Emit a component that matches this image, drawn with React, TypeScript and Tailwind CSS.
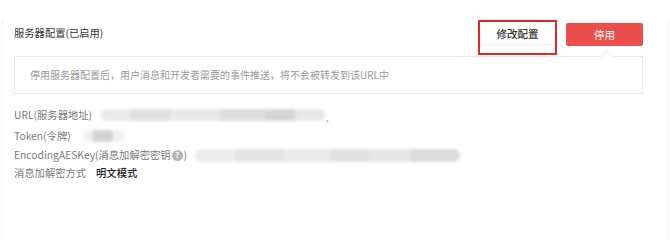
import { type ReactNode } from 'react';

// blurred-out secret values, drawn as soft grey strips
function Redacted({ widths, className }: { widths: [number, string][]; className: string }) {
  return (
    <div className={`flex items-stretch overflow-hidden rounded-full blur-[1.5px] ${className}`}>
      {widths.map(([w, c], i) => (
        <div key={i} className={c} style={{ width: w }} />
      ))}
    </div>
  );
}

function Row({ label, children, h }: { label: ReactNode; children?: ReactNode; h: string }) {
  return (
    <div className={`flex items-center ${h}`}>
      <div className="flex items-center whitespace-nowrap text-[#7a7a7a]">{label}</div>
      {children}
    </div>
  );
}

export default function App() {
  return (
    <div className="h-[227px] w-[670px] bg-white px-[2px] font-['Noto_Sans_CJK_SC',sans-serif] text-[10.3px] leading-[14px]">
      <div className="h-full border-x border-[#f2f2f2] pl-[11px] pr-[24px]">
        {/* Header */}
        <div className="mt-[20px] flex items-start justify-between">
          <h2 className="mt-[6px] text-[10.3px] text-[#333]">服务器配置(已启用)</h2>
          <div className="flex items-start gap-[9px]">
            <div className="h-[35px] w-[79px] border-2 border-[#e3262a] bg-white">
              <button className="flex h-[23px] w-full items-center justify-center border-b border-[#ececec] pt-[2px] text-[10.5px] font-medium text-[#333]">
                修改配置
              </button>
            </div>
            <button className="mt-[3px] flex h-[23px] w-[77px] items-center justify-center rounded-[2px] bg-[#ec4d4d] text-[10.5px] text-white">
              停用
            </button>
          </div>
        </div>

        {/* Notice */}
        <div className="relative mt-[1px] flex h-[38px] items-center border border-[#e8e8e8] bg-white pl-[15px] text-[10px] text-[#9a9a9a]">
          <span className="absolute left-[587px] top-[-5px] h-[9px] w-[9px] rotate-45 border-l border-t border-[#e8e8e8] bg-white" />
          停用服务器配置后，用户消息和开发者需要的事件推送，将不会被转发到该URL中
        </div>

        {/* Details */}
        <div className="mt-[11px] flex flex-col">
          <Row h="h-[20px]" label="URL(服务器地址)">
            <Redacted
              className="ml-[8px] h-[12px] w-[225px]"
              widths={[
                [30, 'bg-[#ebebeb]'],
                [40, 'bg-[#e0e0e0]'],
                [50, 'bg-[#e8e8e8]'],
                [45, 'bg-[#dedede]'],
                [30, 'bg-[#d6d6d6]'],
                [30, 'bg-[#e8e8e8]'],
              ]}
            />
            <span className="ml-[1px] mt-[6px] text-[#777]">.</span>
          </Row>
          <Row h="h-[21px]" label="Token(令牌)">
            <Redacted
              className="ml-[12px] h-[12px] w-[43px]"
              widths={[
                [10, 'bg-[#efefef]'],
                [20, 'bg-[#d3d3d3]'],
                [13, 'bg-[#f2f2f2]'],
              ]}
            />
          </Row>
          <Row
            h="h-[18px]"
            label={
              <>
                EncodingAESKey(消息加解密密钥
                <span className="mx-[1px] inline-flex h-[11px] w-[11px] items-center justify-center rounded-full bg-[#b5b5b5] text-[8px] font-bold leading-none text-white">
                  ?
                </span>
                )
              </>
            }
          >
            <Redacted
              className="ml-[8px] h-[13px] w-[265px]"
              widths={[
                [40, 'bg-[#ececec]'],
                [50, 'bg-[#e4e4e4]'],
                [45, 'bg-[#eaeaea]'],
                [40, 'bg-[#e2e2e2]'],
                [40, 'bg-[#e6e6e6]'],
                [50, 'bg-[#dcdcdc]'],
              ]}
            />
          </Row>
          <Row h="h-[18px]" label="消息加解密方式">
            <span className="ml-[10px] font-medium text-[#222]">明文模式</span>
          </Row>
        </div>
      </div>
    </div>
  );
}
